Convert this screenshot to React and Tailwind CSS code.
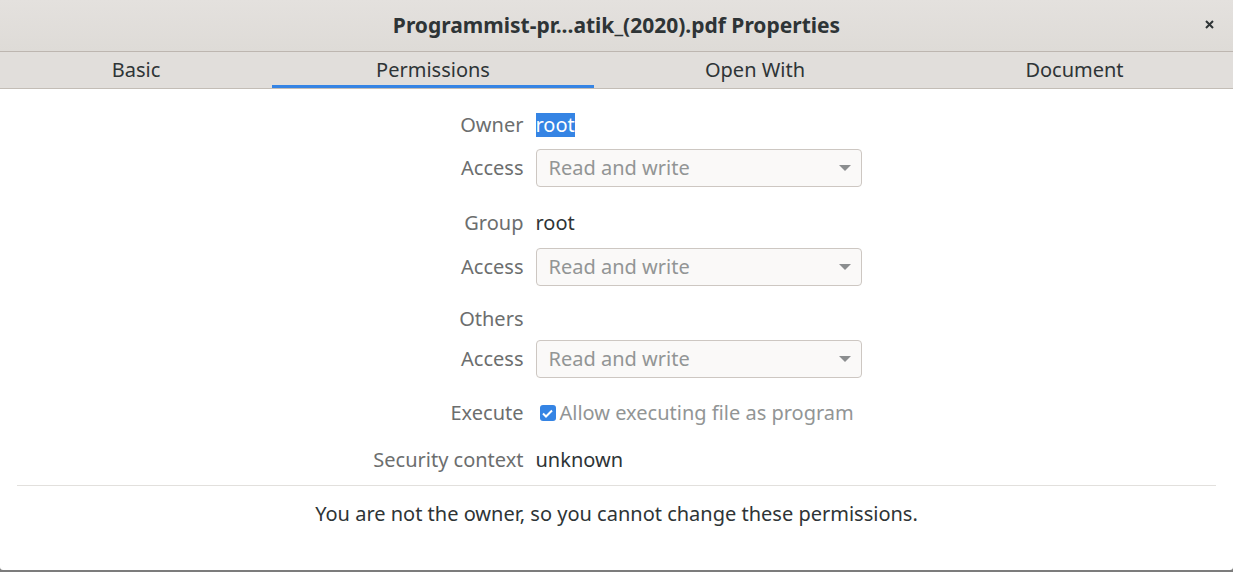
import React from 'react';

const font = { fontFamily: '"Noto Sans", "Open Sans", sans-serif' };

const tabs = [
  { name: 'Basic', w: 'w-[272px]' },
  { name: 'Permissions', w: 'w-[322px]', active: true },
  { name: 'Open With', w: 'w-[322px]' },
  { name: 'Document', w: 'flex-1' },
];

const Combo = () => (
  <div className="flex h-[38px] w-[326px] items-center justify-between rounded-[4px] border border-[#cdc7c2] bg-[#faf9f8] pl-3 pr-[10px] text-[#929595]">
    <span>Read and write</span>
    <svg width="12" height="7" viewBox="0 0 12 7">
      <path d="M0 0h12L6 6z" fill="#8b8e8f" />
    </svg>
  </div>
);

const Row = ({ label, children, className = '' }) => (
  <div className={`flex items-center ${className}`}>
    <div className="w-[152px] shrink-0 text-right text-[#6c6e6e]">{label}</div>
    <div className="ml-3 flex items-center">{children}</div>
  </div>
);

export default function App() {
  return (
    <div className="h-[572px] w-[1233px] overflow-hidden bg-[#7c7c7c]" style={font}>
      <div className="flex h-[570px] flex-col overflow-hidden rounded-b-[3px] bg-white">
        {/* header bar */}
        <div className="relative flex h-[52px] shrink-0 items-center justify-center border-b border-[#bdb6b0] bg-gradient-to-b from-[#e4e1de] to-[#dedbd7]">
          <span className="text-[21px] font-bold text-[#2e3436]">Programmist-pr...atik_(2020).pdf Properties</span>
          <svg className="absolute right-[19px] top-[20px]" width="9" height="9" viewBox="0 0 9 9">
            <path d="M1 1l7 7M8 1L1 8" stroke="#2e3436" strokeWidth="2" />
          </svg>
        </div>

        {/* tabs */}
        <div className="flex h-[37px] shrink-0 border-b border-[#c3bdb6] bg-[#e1dedb]">
          {tabs.map((t) => (
            <div
              key={t.name}
              className={`${t.w} flex items-center justify-center text-[20px] text-[#2e3436] ${t.active ? 'border-b-[3px] border-[#3584e4] pt-[3px]' : ''}`}
            >
              {t.name}
            </div>
          ))}
        </div>

        {/* permissions */}
        <div className="mx-auto flex w-[490px] flex-col text-[20px] leading-6">
          <Row label="Owner" className="mt-[24px] h-6">
            <span className="bg-[#3584e4] text-white">root</span>
          </Row>
          <Row label="Access" className="mt-3">
            <Combo />
          </Row>
          <Row label="Group" className="mt-6 h-6">
            <span className="text-[#2e3436]">root</span>
          </Row>
          <Row label="Access" className="mt-[13px]">
            <Combo />
          </Row>
          <Row label="Others" className="mt-[21px] h-6" />
          <Row label="Access" className="mt-[9px]">
            <Combo />
          </Row>
          <Row label="Execute" className="mt-[23px] h-6">
            <span className="ml-1 flex h-4 w-4 items-center justify-center rounded-[3px] bg-[#3584e4]">
              <svg width="11" height="9" viewBox="0 0 11 9">
                <path d="M1 4.5l3 3 6-6" stroke="white" strokeWidth="2" fill="none" />
              </svg>
            </span>
            <span className="ml-1 text-[#929595]">Allow executing file as program</span>
          </Row>
          <Row label="Security context" className="mt-[23px] h-6">
            <span className="text-[#2e3436]">unknown</span>
          </Row>
        </div>

        <div className="mx-[17px] mt-[13px] border-t border-[#e2e0dd]" />
        <div className="mt-[16px] text-center text-[20px] leading-6 text-[#2e3436]">
          You are not the owner, so you cannot change these permissions.
        </div>
      </div>
    </div>
  );
}
